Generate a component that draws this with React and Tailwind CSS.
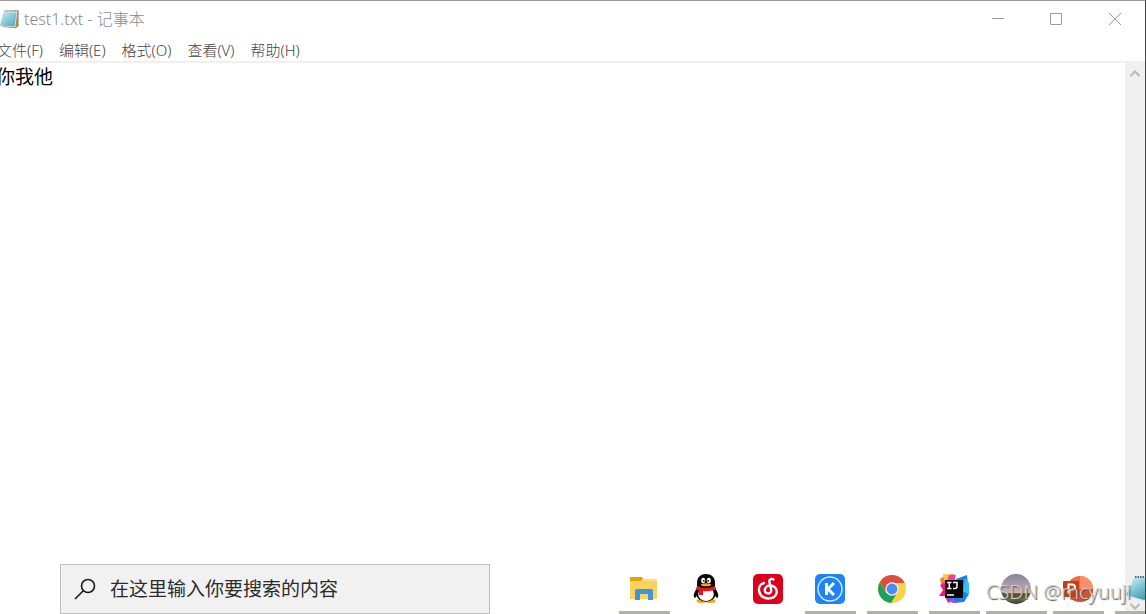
import { useState } from 'react';

function NotepadIcon() {
  return (
    <svg viewBox="0 0 30 30" className="h-5 w-5" aria-hidden="true">
      <defs>
        <linearGradient id="pad" x1="0" y1="0" x2="1" y2="1">
          <stop offset="0" stopColor="#c9eef4" />
          <stop offset="0.6" stopColor="#7cc3d3" />
          <stop offset="1" stopColor="#4fa3b8" />
        </linearGradient>
      </defs>
      <path d="M8 3 L28 2 L28 26 L23 29 L4 27 Z" fill="#a98d5c" />
      <path d="M8 3 L26 3 L23 27 L2 26 Z" fill="#e9f1f3" />
      <path d="M5 5 L25 5 L22 26 L0 25 Z" fill="url(#pad)" />
      <path d="M7 3 H26" stroke="#6f7f84" strokeWidth="2" strokeDasharray="1.5 1.5" />
    </svg>
  );
}

function NotepadLargeIcon() {
  return (
    <svg viewBox="0 0 30 30" className="h-[30px] w-[30px]" aria-hidden="true">
      <defs>
        <linearGradient id="padLarge" x1="0" y1="0" x2="0.7" y2="1">
          <stop offset="0" stopColor="#d4eff4" />
          <stop offset="0.5" stopColor="#7fc6d6" />
          <stop offset="1" stopColor="#3f96ac" />
        </linearGradient>
      </defs>
      <path d="M10 2 L29 2 L29 20 L20 28 L2 23 Z" fill="#dfe9ec" />
      <path d="M9 4 L29 4 L24 23 L19 26 L1 21 Z" fill="url(#padLarge)" />
      <path d="M10 3 H29" stroke="#59666a" strokeWidth="2" strokeDasharray="1.5 1" />
    </svg>
  );
}

function ExplorerIcon() {
  return (
    <svg viewBox="0 0 30 30" className="h-[30px] w-[30px]" aria-hidden="true">
      <path d="M1 4 Q1 3 2 3 H12 L14 5 H27 Q28 5 28 6 V25 H1 Z" fill="#ffd25c" />
      <path d="M1 4 Q1 3 2 3 H12 Q14 3 14 5 L12 7 H1 Z" fill="#e3a20c" />
      <path d="M14 5 H28 V7 H13 Z" fill="#ffdc7d" />
      <path d="M6 26 V17 Q6 15 8 15 H22 Q24 15 24 17 V26 H19 V20 H11 V26 Z" fill="#3b96de" />
    </svg>
  );
}

function QQIcon() {
  return (
    <svg viewBox="0 0 30 30" className="h-[30px] w-[30px]" aria-hidden="true">
      <ellipse cx="10.5" cy="27" rx="5" ry="1.9" fill="#f5a800" />
      <ellipse cx="19.5" cy="27" rx="5" ry="1.9" fill="#f5a800" />
      <path d="M6 14 Q1 21 3.5 24 Q5 24 6.5 20 Z M24 14 Q29 21 26.5 24 Q25 24 23.5 20 Z" fill="#080808" />
      <ellipse cx="15" cy="19.5" rx="9.8" ry="8.3" fill="#080808" />
      <ellipse cx="15" cy="20" rx="7.8" ry="6.9" fill="#fff" />
      <path d="M6 14 V9 C6 3 10 0 15 0 S24 3 24 9 V14 Z" fill="#080808" />
      <ellipse cx="12.2" cy="6.5" rx="2" ry="2.8" fill="#fff" />
      <ellipse cx="17.8" cy="6.5" rx="2" ry="2.8" fill="#fff" />
      <circle cx="12.8" cy="6.8" r="0.9" />
      <circle cx="17.2" cy="6.8" r="0.9" />
      <ellipse cx="15" cy="10.8" rx="5" ry="1.5" fill="#f5a800" />
      <path d="M6 12 Q15 16 24 12 L25 15 Q19 18 12 17 V21 H8 V16.5 L5 15 Z" fill="#ee1220" />
    </svg>
  );
}

function NetEaseIcon() {
  return (
    <svg viewBox="0 0 30 30" className="h-[30px] w-[30px]" aria-hidden="true">
      <rect width="30" height="30" rx="5" fill="#dd001b" />
      <path
        d="M20.5 5.5 C18 4 16 5.5 16.4 7.8 L18.2 16 C18.8 20.5 11.8 20.5 11.8 16.2 C12 12.8 15 11 18 11.5 C26 13 26 24 15.5 24.5 C4 24 3.5 11 11 9"
        fill="none"
        stroke="#fff"
        strokeWidth="2.4"
        strokeLinecap="round"
      />
    </svg>
  );
}

function KuGouIcon() {
  return (
    <svg viewBox="0 0 30 30" className="h-[30px] w-[30px]" aria-hidden="true">
      <rect width="30" height="30" rx="5" fill="#1e82fb" />
      <circle cx="15" cy="15" r="12" fill="none" stroke="#d9eaff" strokeWidth="1.4" />
      <path d="M11.5 9 V21 M19 9 L13 15 L19 21" fill="none" stroke="#fff" strokeWidth="3" />
    </svg>
  );
}

function ChromeIcon() {
  return (
    <svg viewBox="0 0 30 30" className="h-[30px] w-[30px]" aria-hidden="true">
      <circle cx="15" cy="15" r="14" fill="#fdd24b" />
      <path d="M2.9 8 A14 14 0 0 1 27.7 9 H15 L9 18.5 Z" fill="#dc4c3f" />
      <path d="M2.9 8 A14 14 0 0 0 14 29 L20 19 H9 Z" fill="#1ca15d" />
      <circle cx="15" cy="15" r="6.7" fill="#f2f2f2" />
      <circle cx="15" cy="15" r="5.4" fill="#4a8bf5" />
    </svg>
  );
}

function IdeaIcon() {
  return (
    <svg viewBox="0 0 30 30" className="h-[30px] w-[30px]" aria-hidden="true">
      <path d="M1 5 L7 1 L15 0 L14 15 L3 13 Z" fill="#fb7a35" />
      <path d="M4 0 L15 1 L15 8 L5 6 Z" fill="#fdc536" />
      <path d="M0 22 L4 16 L1 11 L5 9 L15 14 L15 25 L9 29 L6 22 Z" fill="#f3158c" />
      <path d="M10 1 L17 1 L15 9 L8 7 Z" fill="#f13fa6" />
      <path d="M17 5 L28 1 L30 20 L25 28 L14 29 L9 25 Z" fill="#1682eb" />
      <path d="M26 4 L30 9 L30 21 L24 17 Z" fill="#35bdf5" />
      <path d="M14 24 L19 29 L10 28 Z" fill="#a84ae0" />
      <rect x="6" y="6" width="18" height="18" fill="#090307" />
      <path d="M8 8.5 H12.5 M10.3 8.5 V14.5 M8 14.5 H12.5 M14 8.5 H18 V12.5 Q18 14.5 16 14.5 H14" fill="none" stroke="#fff" strokeWidth="1.5" />
      <path d="M8 21 H15" stroke="#fff" strokeWidth="1.5" />
    </svg>
  );
}

function EclipseIcon() {
  return (
    <svg viewBox="0 0 30 30" className="h-[30px] w-[30px]" aria-hidden="true">
      <defs>
        <linearGradient id="sunset" x1="0" y1="0" x2="0" y2="1">
          <stop offset="0" stopColor="#85839b" />
          <stop offset="0.5" stopColor="#b7a9b2" />
          <stop offset="0.62" stopColor="#d7b59a" />
          <stop offset="0.66" stopColor="#494b38" />
          <stop offset="0.85" stopColor="#687044" />
          <stop offset="1" stopColor="#30322c" />
        </linearGradient>
      </defs>
      <circle cx="15" cy="15" r="15" fill="url(#sunset)" />
    </svg>
  );
}

function PowerPointIcon() {
  return (
    <svg viewBox="0 0 30 30" className="h-[30px] w-[30px]" aria-hidden="true">
      <circle cx="17" cy="15" r="13" fill="#ed6c47" />
      <path d="M17 2 A13 13 0 0 1 30 15 H17 Z" fill="#ff8f6b" />
      <path d="M4 15 H30 A13 13 0 0 1 4 15 Z" fill="#d35230" />
      <rect x="0" y="7" width="16" height="16" rx="1" fill="#c43e1c" />
      <path d="M5.5 19.5 V10.5 H9 Q12 10.5 12 13.3 Q12 16 9 16 H5.5" fill="none" stroke="#fff" strokeWidth="2" />
    </svg>
  );
}

const menus = ['文件(F)', '编辑(E)', '格式(O)', '查看(V)', '帮助(H)'];

const apps = [
  { name: '文件资源管理器', icon: <ExplorerIcon />, running: true },
  { name: 'QQ', icon: <QQIcon />, running: false },
  { name: '网易云音乐', icon: <NetEaseIcon />, running: false },
  { name: '酷狗音乐', icon: <KuGouIcon />, running: true },
  { name: 'Google Chrome', icon: <ChromeIcon />, running: true },
  { name: 'IntelliJ IDEA', icon: <IdeaIcon />, running: true },
  { name: 'Eclipse', icon: <EclipseIcon />, running: true, wide: true },
  { name: 'PowerPoint', icon: <PowerPointIcon />, running: true },
  { name: '记事本', icon: <NotepadLargeIcon />, running: true },
];

function TitleBar() {
  return (
    <header className="flex h-9 items-center">
      <NotepadIcon />
      <h1 className="ml-1 flex-1 text-[16px] font-light text-[#8a8a8a]">test1.txt - 记事本</h1>
      <div className="flex text-[#999999]">
        <button type="button" aria-label="最小化" className="flex h-9 w-[58px] items-center justify-center">
          <svg viewBox="0 0 12 12" className="h-3 w-3" stroke="currentColor"><path d="M0 5.5 H12" /></svg>
        </button>
        <button type="button" aria-label="最大化" className="flex h-9 w-[58px] items-center justify-center">
          <svg viewBox="0 0 12 12" className="h-3 w-3" fill="none" stroke="currentColor"><path d="M.5 .5 H11.5 V11.5 H.5 Z" /></svg>
        </button>
        <button type="button" aria-label="关闭" className="flex h-9 w-[60px] items-center justify-center">
          <svg viewBox="0 0 12 12" className="h-3 w-3" stroke="currentColor"><path d="M0 0 L12 12 M12 0 L0 12" /></svg>
        </button>
      </div>
    </header>
  );
}

function Taskbar() {
  const [search, setSearch] = useState('');

  return (
    <footer className="absolute inset-x-0 bottom-0 flex h-[50px] overflow-hidden pl-[60px]">
      <label className="flex w-[430px] shrink-0 items-center gap-3.5 border border-[#bfbfbf] bg-[#f1f1f1] pl-[13px]">
        <svg viewBox="0 0 22 22" className="h-[22px] w-[22px]" fill="none" stroke="#1a1a1a" strokeWidth="1.6" aria-hidden="true">
          <circle cx="14" cy="8" r="6.5" />
          <path d="M9.5 12.5 L1 21" />
        </svg>
        <input
          type="text"
          aria-label="搜索"
          value={search}
          onChange={(e) => setSearch(e.target.value)}
          placeholder="在这里输入你要搜索的内容"
          className="min-w-0 flex-1 bg-transparent text-[19px] outline-none placeholder:text-[#2b2b2b]"
        />
      </label>
      <nav className="ml-[129px] flex gap-[11px]">
        {apps.map((app) => (
          <button
            key={app.name}
            type="button"
            aria-label={app.name}
            className={
              app.wide
                ? '-mx-[5px] flex w-[61px] shrink-0 flex-col justify-between pt-2.5'
                : 'flex w-[51px] shrink-0 flex-col justify-between pt-2.5'
            }
          >
            <span className={app.wide ? 'flex pl-[15px]' : 'flex pl-2.5'}>{app.icon}</span>
            {app.running && <span className="h-[3px] w-full bg-[#b0b2a4]" />}
          </button>
        ))}
      </nav>
    </footer>
  );
}

export default function App() {
  const [text, setText] = useState('你我他');

  return (
    <div className="relative flex h-screen flex-col overflow-hidden border-t border-r border-t-[#999999] border-r-[#444444] bg-white font-['Noto_Sans','Noto_Sans_CJK_SC',sans-serif]">
      <TitleBar />
      <nav className="-ml-[3px] flex h-6 items-center gap-4 pt-0.5 text-[15px] font-light text-[#444444]">
        {menus.map((menu) => (
          <button key={menu} type="button">{menu}</button>
        ))}
      </nav>
      <main className="flex min-h-0 flex-1 border-t-2 border-[#f0f0f0]">
        <textarea
          aria-label="文本编辑器"
          value={text}
          onChange={(e) => setText(e.target.value)}
          className="-ml-1 flex-1 resize-none text-[19px] leading-7 text-black outline-none"
        />
        <div className="flex w-5 flex-col items-center justify-between bg-[#f0f0f0] py-1 text-[#b8b8b8]">
          <button type="button" aria-label="向上滚动">
            <svg viewBox="0 0 10 12" className="block h-3 w-2.5" fill="none" stroke="currentColor" strokeWidth="2"><path d="M.5 9 L5 4.5 L9.5 9" /></svg>
          </button>
          <button type="button" aria-label="向下滚动">
            <svg viewBox="0 0 10 12" className="block h-3 w-2.5" fill="none" stroke="currentColor" strokeWidth="2"><path d="M.5 6 L5 10.5 L9.5 6" /></svg>
          </button>
        </div>
      </main>
      <Taskbar />
      <p className="absolute right-3.5 bottom-2 text-[20px] leading-7 font-light text-[#d0d0d0] [text-shadow:1px_1px_1px_#555555]">
        CSDN @mcyuuji
      </p>
    </div>
  );
}
